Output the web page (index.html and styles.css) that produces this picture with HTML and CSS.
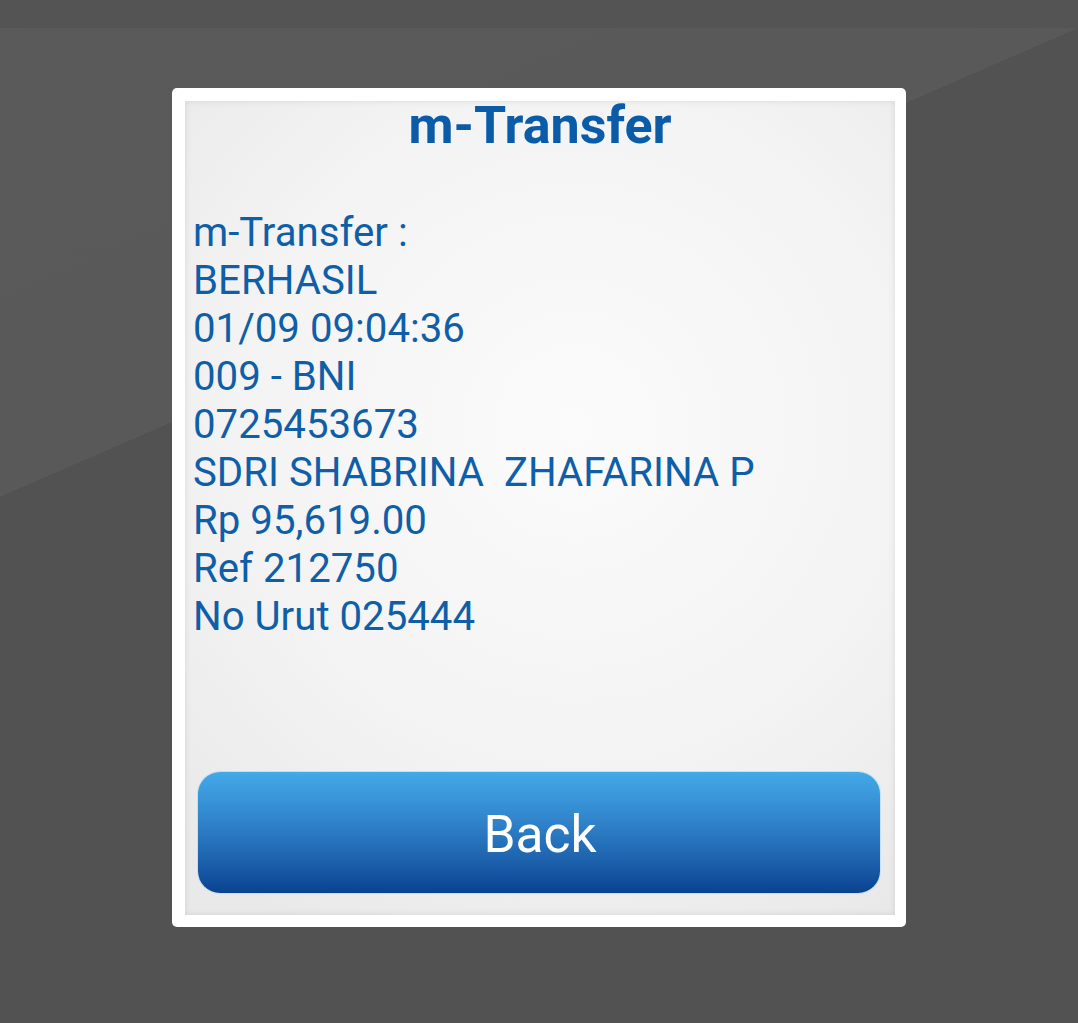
FILE: index.html
```html
<!DOCTYPE html>
<html>
<head>
<meta charset="utf-8">
<link rel="stylesheet" href="styles.css">
</head>
<body>
<div class="screen">
  <div class="card">
    <div class="panel">
      <h1 class="title">m-Transfer</h1>
      <div class="message">
        <div>m-Transfer :</div>
        <div>BERHASIL</div>
        <div>01/09 09:04:36</div>
        <div>009 - BNI</div>
        <div>0725453673</div>
        <div>SDRI SHABRINA&nbsp; ZHAFARINA P</div>
        <div>Rp 95,619.00</div>
        <div>Ref 212750</div>
        <div>No Urut 025444</div>
      </div>
      <button class="back-btn">Back</button>
    </div>
  </div>
</div>
</body>
</html>
```

FILE: styles.css
```css
html, body {
  margin: 0;
  padding: 0;
}

body {
  font-family: Roboto, "Noto Sans", "Liberation Sans", sans-serif;
}

.screen {
  width: 1078px;
  height: 1023px;
  box-sizing: border-box;
  padding-top: 88px;
  background:
    linear-gradient(#545454, #545454) top left / 100% 28px no-repeat,
    linear-gradient(156.5deg, #5a5a5a 0%, #595959 33.3%, #525252 33.3%, #525252 100%);
  display: flex;
  flex-direction: column;
  align-items: flex-start;
}

.card {
  margin-left: 172px;
  width: 734px;
  height: 839px;
  box-sizing: border-box;
  background: #ffffff;
  border-radius: 5px;
  padding: 13px 11px 12px 13px;
  display: flex;
}

.panel {
  flex: 1;
  min-height: 0;
  display: flex;
  flex-direction: column;
  padding: 1px 15px 22px 13px;
  background: radial-gradient(ellipse 80% 70% at 55% 40%, #fbfbfb 0%, #f3f3f3 60%, #e9e9e9 100%);
  box-shadow: inset 0 0 6px rgba(0, 0, 0, 0.10);
}

.title {
  margin: 0;
  font-size: 52px;
  line-height: 48px;
  font-weight: 700;
  color: #0b5ca8;
  text-align: center;
  padding-left: 2px;
}

.message {
  margin-top: 59px;
  margin-left: -5px;
  font-size: 40.2px;
  line-height: 48px;
  color: #0f5ea8;
  white-space: nowrap;
}

.back-btn {
  margin-top: auto;
  flex-shrink: 0;
  height: 121px;
  border: none;
  border-radius: 22px;
  background: linear-gradient(#43a9e8 0%, #3389cf 35%, #1f65b0 70%, #0a4290 100%);
  box-shadow: 0 0 0 1px rgba(170, 215, 245, 0.55);
  color: #ffffff;
  font-family: Roboto, "Noto Sans", "Liberation Sans", sans-serif;
  font-size: 51.5px;
  padding: 4px 0 0 2px;
  display: flex;
  align-items: center;
  justify-content: center;
}
```
